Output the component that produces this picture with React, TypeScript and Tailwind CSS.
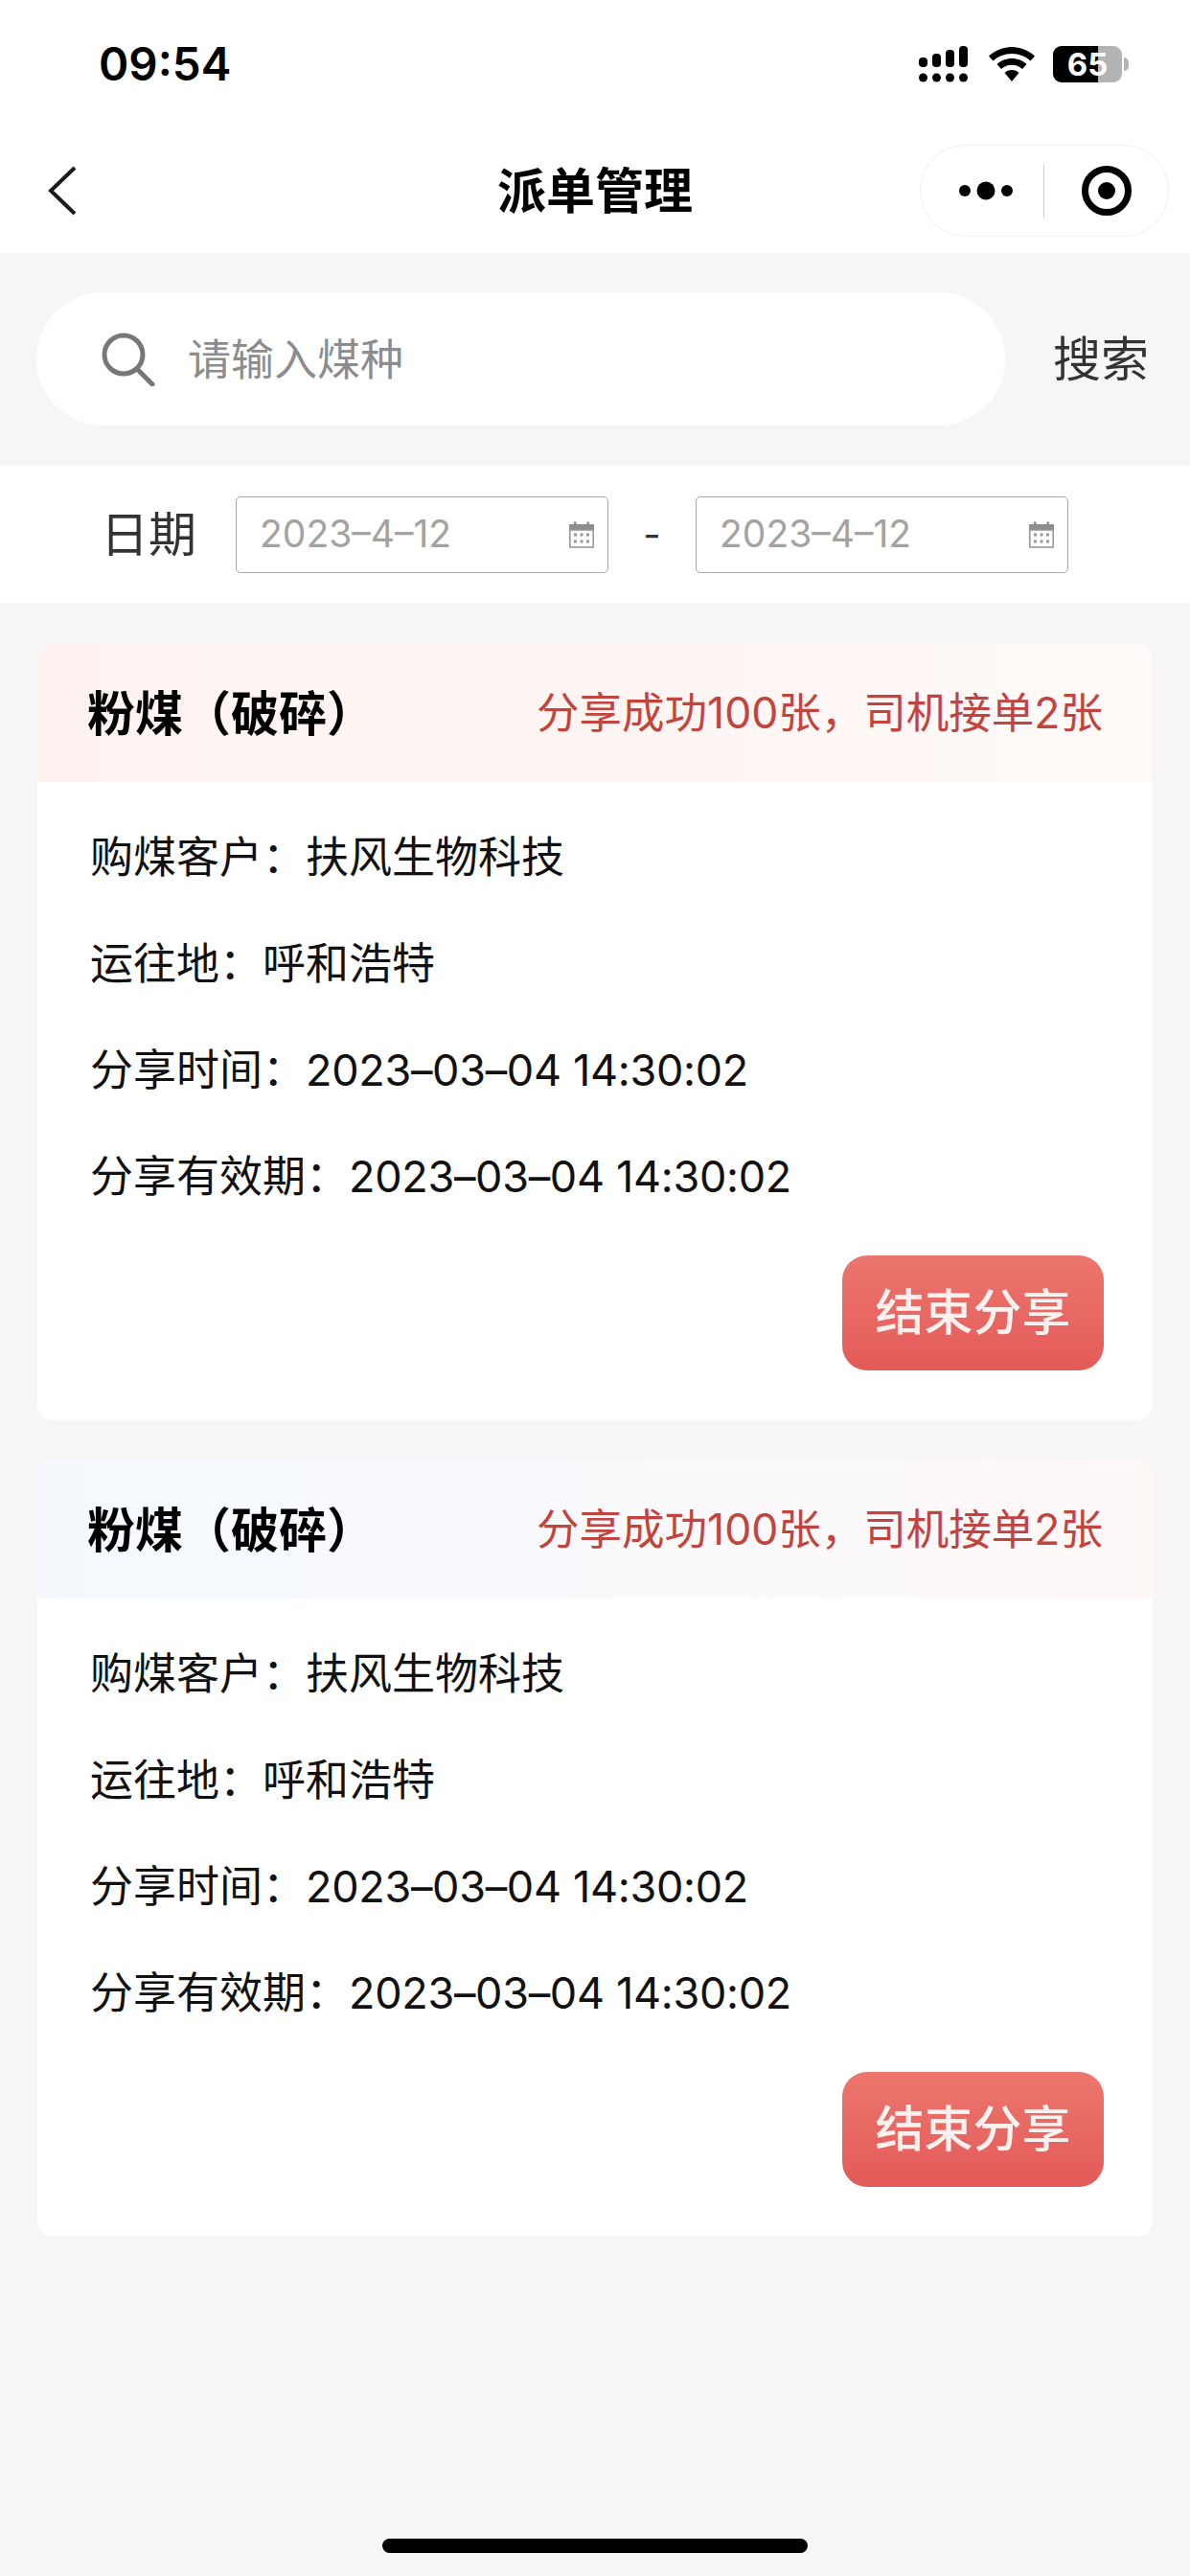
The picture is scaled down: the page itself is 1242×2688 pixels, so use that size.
import React from 'react';

const orders = [
  { id: 1, head: 'bg-gradient-to-r from-[#fdf2f0] via-[#fef5f3] to-[#fffaf9]' },
  { id: 2, head: 'bg-gradient-to-r from-[#f5f9fe] via-[#f9f9fc] to-[#fef8f7]' },
];

const CalendarIcon = () => (
  <svg width="28" height="28" viewBox="0 0 28 28" fill="#999">
    <path d="M1 4a1 1 0 0 1 1-1h24a1 1 0 0 1 1 1v6H1z" fill="#8e8e8e" />
    <rect x="6" y="0.5" width="2.5" height="4" fill="#8e8e8e" />
    <rect x="19.5" y="0.5" width="2.5" height="4" fill="#8e8e8e" />
    <rect x="1.8" y="9" width="24.4" height="18" fill="#fff" stroke="#999" strokeWidth="1.6" />
    <rect x="6" y="12.5" width="3" height="3" />
    <rect x="12.5" y="12.5" width="3" height="3" />
    <rect x="19" y="12.5" width="3" height="3" />
    <rect x="6" y="19.5" width="3" height="3" />
    <rect x="12.5" y="19.5" width="3" height="3" />
    <rect x="19" y="19.5" width="3" height="3" />
  </svg>
);

const DateBox = () => (
  <div className="flex h-[80px] w-[389px] items-center justify-between rounded-[5px] border border-[#aaaaaa] pl-[24px] pr-[13px]">
    <span className="text-[39px] text-[#a3a3a3]">2023–4–12</span>
    <CalendarIcon />
  </div>
);

const OrderCard = ({ head }: { head: string }) => (
  <div className="overflow-hidden rounded-[16px] bg-white">
    <div className={`flex h-[144px] items-center justify-between pl-[52px] pr-[52px] ${head}`}>
      <span className="pt-[3px] text-[50px] font-bold text-black">粉煤（破碎）</span>
      <span className="text-[44.5px] text-[#c2443e]">分享成功100张，司机接单2张</span>
    </div>
    <div className="flex flex-col px-[55px] pt-[23px] text-[45px] leading-[111px] text-[#111111]">
      <p>购煤客户：扶风生物科技</p>
      <p>运往地：呼和浩特</p>
      <p>
        分享时间：<span className="tracking-[-0.3px]">2023–03–04 14:30:02</span>
      </p>
      <p>
        分享有效期：<span className="tracking-[-0.3px]">2023–03–04 14:30:02</span>
      </p>
    </div>
    <div className="flex justify-end pr-[51px] pt-[27px] pb-[52px]">
      <button className="flex h-[120px] w-[273px] items-center justify-center rounded-[26px] bg-gradient-to-b from-[#ec766e] to-[#e35a59] text-[51px] font-medium text-[#fdf1f0]">
        结束分享
      </button>
    </div>
  </div>
);

export default function App() {
  return (
    <div
      className="flex h-[2688px] w-[1242px] flex-col overflow-hidden bg-[#f6f6f6]"
      style={{ fontFamily: 'Inter, "Noto Sans CJK SC", sans-serif' }}
    >
      {/* Header */}
      <div className="bg-white">
        <div className="flex h-[134px] items-center justify-between pl-[103px] pr-[64px]">
          <span className="text-[47.5px] font-semibold text-black">09:54</span>
          <div className="flex items-center">
            <svg width="52" height="38" viewBox="0 0 52 38" fill="#000">
              <rect x="0" y="12" width="9" height="10" rx="4" />
              <rect x="14" y="8" width="9" height="14" rx="4" />
              <rect x="28" y="4" width="9" height="18" rx="4" />
              <rect x="42" y="0" width="9" height="22" rx="4" />
              <circle cx="4.5" cy="33" r="4.5" />
              <circle cx="18.5" cy="33" r="4.5" />
              <circle cx="32.5" cy="33" r="4.5" />
              <circle cx="46.5" cy="33" r="4.5" />
            </svg>
            <svg className="ml-[21px]" width="48" height="36" viewBox="0 0 48 36" fill="#000">
              <path d="M24 0C15 0 7 3.500 0 9.500l4.500 5C10 9.800 16.500 7 24 7s14 2.800 19.500 7.500l4.500-5C41 3.500 33 0 24 0z" />
              <path d="M24 12c-6 0-11.500 2.200-15.500 6l4.500 5c3-2.700 6.800-4.200 11-4.200s8 1.500 11 4.200l4.500-5C35.500 14.200 30 12 24 12z" />
              <path d="M24 24c-3 0-5.600 1-7.500 3L24 36l7.500-9c-1.900-2-4.500-3-7.500-3z" />
            </svg>
            <div className="relative ml-[19px] flex h-[38px] w-[72px] items-center justify-center overflow-hidden rounded-[9px] bg-[#b3b3b3]">
              <div className="absolute inset-y-0 left-0 w-[47px] bg-black" />
              <span className="relative text-[33px] font-bold leading-none text-white">65</span>
            </div>
            <div className="ml-[2px] h-[14px] w-[5px] rounded-r-full bg-[#b3b3b3]" />
          </div>
        </div>
        <div className="grid h-[130px] grid-cols-[1fr_auto_1fr] items-center">
          <div className="pl-[50px]">
            <svg width="30" height="52" viewBox="0 0 30 52" fill="none" stroke="#1a1a1a" strokeWidth="4">
              <path d="M28 2 3 26l25 24" />
            </svg>
          </div>
          <h1 className="text-[51px] font-bold leading-none text-black">派单管理</h1>
          <div className="flex justify-end pr-[22px]">
            <div className="flex h-[96px] w-[260px] items-center rounded-full border border-[#efefef]">
              <svg className="ml-[35px]" width="62" height="20" viewBox="0 0 62 20" fill="#000">
                <circle cx="11" cy="10" r="6" />
                <circle cx="33" cy="10" r="9.500" />
                <circle cx="55" cy="10" r="6" />
              </svg>
              <div className="ml-[31px] h-[56px] w-px bg-[#cfcfcf]" />
              <svg className="ml-[39px]" width="52" height="52" viewBox="0 0 52 52">
                <circle cx="26" cy="26" r="22.500" fill="none" stroke="#000" strokeWidth="7" />
                <circle cx="26" cy="26" r="9" fill="#000" />
              </svg>
            </div>
          </div>
        </div>
      </div>

      {/* Search */}
      <div className="flex items-center pl-[38px] pt-[41px] pb-[42px]">
        <div className="flex h-[139px] w-[1011px] items-center rounded-full bg-white pl-[68px]">
          <svg width="56" height="56" viewBox="0 0 56 56" fill="none" stroke="#777777" strokeWidth="5">
            <circle cx="23" cy="23" r="20" />
            <path d="M37 38l16 16" strokeLinecap="round" />
          </svg>
          <span className="ml-[34px] pt-[2px] text-[45px] text-[#8c8c8c]">请输入煤种</span>
        </div>
        <span className="ml-[50px] pt-[2px] text-[50px] text-[#333333]">搜索</span>
      </div>

      {/* Date filter */}
      <div className="flex h-[143px] items-center bg-white pl-[105px]">
        <span className="pt-[2px] text-[50px] text-[#333333]">日期</span>
        <div className="ml-[41px]">
          <DateBox />
        </div>
        <span className="w-[91px] text-center text-[40px] text-[#333333]">-</span>
        <DateBox />
      </div>

      {/* Orders */}
      <div className="flex flex-col gap-[42px] px-[39px] pt-[43px]">
        {orders.map((o) => (
          <OrderCard key={o.id} head={o.head} />
        ))}
      </div>

      <div className="mt-auto flex justify-center pb-[24px]">
        <div className="h-[15px] w-[444px] rounded-full bg-black" />
      </div>
    </div>
  );
}
